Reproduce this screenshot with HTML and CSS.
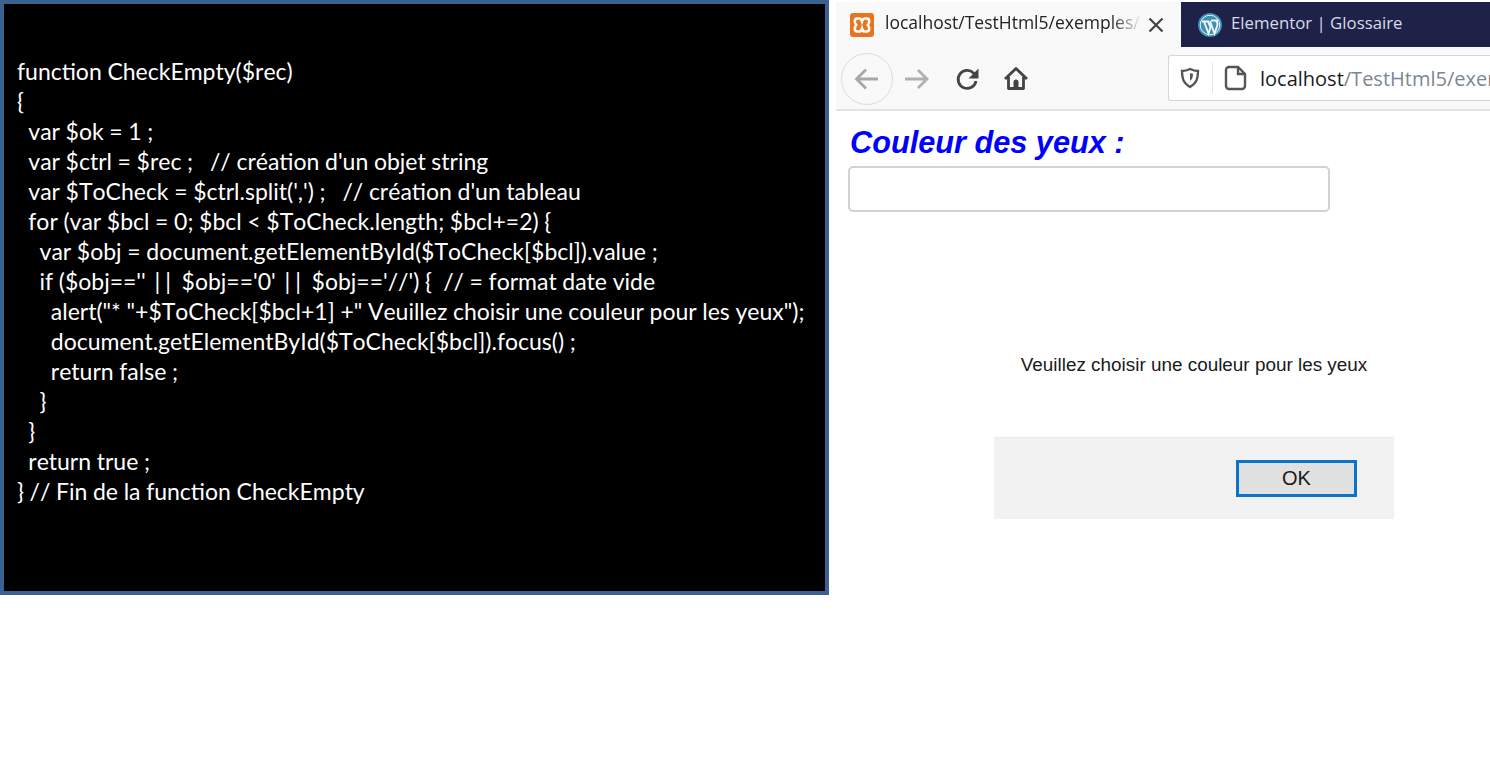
FILE: index.html
```html
<!DOCTYPE html>
<html lang="fr">
<head>
<meta charset="utf-8">
<title>Couleur des yeux</title>
<link rel="stylesheet" href="styles.css">
</head>
<body>
<div class="page">
<div class="code">
  <div class="line">function CheckEmpty($rec)</div>
  <div class="line">{</div>
  <div class="line">  var $ok = 1 ;</div>
  <div class="line">  var $ctrl = $rec ;   // création d'un objet string</div>
  <div class="line">  var $ToCheck = $ctrl.split(',') ;   // création d'un tableau</div>
  <div class="line">  for (var $bcl = 0; $bcl &lt; $ToCheck.length; $bcl+=2) {</div>
  <div class="line">    var $obj = document.getElementById($ToCheck[$bcl]).value ;</div>
  <div class="line">    if ($obj=='' <span class="pipes">||</span> $obj=='0' <span class="pipes">||</span> $obj=='//') {  // = format date vide</div>
  <div class="line">      alert("* "+$ToCheck[$bcl+1] +" Veuillez choisir une couleur pour les yeux");</div>
  <div class="line">      document.getElementById($ToCheck[$bcl]).focus() ;</div>
  <div class="line">      return false ;</div>
  <div class="line">    }</div>
  <div class="line">  }</div>
  <div class="line">  return true ;</div>
  <div class="line">} // Fin de la function CheckEmpty</div>
</div>
<section class="browser">
  <div class="tabs">
    <div class="tab tab-active">
      <svg class="icon" width="26" height="26" viewBox="0 0 26 26"><rect x="1" y="1" width="24" height="24" rx="3" fill="#e8741e"/><path d="M8 6.500h2.500c1.500 0 2 1.500 2.500 3 .5-1.500 1-3 2.500-3H18c2.500 0 3 4 .8 6.500 2.200 2.500 1.700 6.500-.8 6.500h-2.500c-1.500 0-2-1.500-2.500-3-.5 1.500-1 3-2.500 3H8c-2.500 0-3-4-.8-6.500C5 10.500 5.500 6.500 8 6.500z" fill="none" stroke="#fff" stroke-width="2.600"/></svg>
      <span class="tab-title tab-title-fade">localhost/TestHtml5/exemples/</span>
      <svg class="icon tab-close" width="16" height="16" viewBox="0 0 16 16"><path d="M1.500 1.500l13 13M14.500 1.500l-13 13" stroke="#444" stroke-width="2.200" fill="none"/></svg>
    </div>
    <div class="tab tab-dark">
      <svg class="icon" width="26" height="26" viewBox="0 0 26 26"><circle cx="13" cy="13" r="12" fill="#3f8fb5"/><circle cx="13" cy="13" r="9.800" fill="none" stroke="#e8f2f7" stroke-width="1"/><path d="M5 9.500h7M14 8.500h7M7 9.500l4.500 12 2-6-2.500-6M13 9l4.500 12.500 2.800-8c.6-1.700-.2-3.500-1.300-4.500" fill="none" stroke="#f2f7fa" stroke-width="1.800"/></svg>
      <span class="tab-title tab-title-small">Elementor | Glossaire</span>
    </div>
  </div>
  <div class="toolbar">
    <div class="nav-buttons">
      <span class="back">
        <svg class="icon" width="28" height="28" viewBox="0 0 28 28"><path d="M25 14H4M13 4.500L3.500 14l9.500 9.500" fill="none" stroke="#a8a8a8" stroke-width="2.800"/></svg>
      </span>
      <svg class="icon" width="28" height="28" viewBox="0 0 28 28"><path d="M2 14h22M15 5l9 9-9 9" fill="none" stroke="#b0b0b0" stroke-width="2.800"/></svg>
      <svg class="icon reload" width="26" height="26" viewBox="0 0 26 26"><path d="M21 15a9 9 0 1 1-2.500-8L21 9.500" fill="none" stroke="#444" stroke-width="2.800"/><path d="M23.500 2.500v10h-10z" fill="#444"/></svg>
      <svg class="icon home" width="26" height="26" viewBox="0 0 26 26"><path d="M2 13L13 2.500 24 13M5.500 11v11.500h15V11" fill="none" stroke="#444" stroke-width="2.800" stroke-linejoin="round"/><path d="M10.500 22v-6a2.500 2.500 0 0 1 5 0v6z" fill="#444"/></svg>
    </div>
    <div class="urlbar">
      <svg class="icon" width="20" height="22" viewBox="0 0 20 22"><path d="M10 2c3 1.500 5 2 8 2 0 7-1 12-8 16C3 16 2 11 2 4c3 0 5-.5 8-2z" fill="none" stroke="#555" stroke-width="2.400"/><path d="M10 6c1 .5 2 .7 3 .8 0 3-.5 5.500-3 7.200z" fill="#555"/></svg>
      <span class="divider"></span>
      <svg class="icon" width="24" height="26" viewBox="0 0 24 26"><path d="M3 5a3 3 0 0 1 3-3h9l7 7v12a3 3 0 0 1-3 3H6a3 3 0 0 1-3-3z M15 2v7h7" fill="none" stroke="#555" stroke-width="2.400"/></svg>
      <span class="url"><span class="host">localhost</span>/TestHtml5/exemples/</span>
    </div>
  </div>
  <div class="content">
    <h1 class="label">Couleur des yeux :</h1>
    <div class="field"></div>
    <div class="dialog">
      <p class="message">Veuillez choisir une couleur pour les yeux</p>
      <div class="dialog-footer"><button class="ok" type="button">OK</button></div>
    </div>
  </div>
</section>
</div>
</body>
</html>
```
FILE: styles.css
```css
* { box-sizing: border-box; }
html, body { margin: 0; height: 100%; background: #fff; overflow: hidden; }
.page { display: flex; align-items: flex-start; gap: 7px; width: 1490px; height: 758px; }
.code {
  flex: 0 0 829px; height: 595px; padding: 52px 0 0 13px;
  background: #000; border: 4px solid #3a6190; color: #fff;
  font: 23px/30px Lato, "Open Sans", sans-serif; font-kerning: none; word-spacing: -0.25px; overflow: hidden;
}
.line { height: 30px; white-space: pre; }
.pipes { letter-spacing: 5px; padding-left: 3px; }
.browser { flex: 1; min-width: 0; display: flex; flex-direction: column; height: 758px; overflow: hidden; font-family: "Open Sans", sans-serif; }
.icon { flex: none; }
.tabs { display: flex; height: 45px; margin-top: 2px; flex: none; }
.tab { display: flex; align-items: center; }
.tab-active { flex: 0 0 345px; padding: 0 17px 0 13px; background: #f9f9fa; color: #222; }
.tab-dark { flex: 1; padding-left: 16px; background: #1f2248; color: #d8dbe6; }
.tab-title { font-size: 17.500px; margin: 0 0 5px 10px; white-space: nowrap; overflow: hidden; }
.tab-title-fade { flex: 1; min-width: 0; -webkit-mask-image: linear-gradient(to right, #000 88%, transparent 100%); mask-image: linear-gradient(to right, #000 88%, transparent 100%); }
.tab-title-small { font-size: 16.800px; margin-left: 8px; }
.tab-close { margin-left: 6px; }
.toolbar { display: flex; align-items: center; height: 64px; flex: none; background: #f9f9fa; border-bottom: 2px solid #e3e3e3; padding: 1px 0 0 5px; }
.nav-buttons { display: flex; align-items: center; width: 327px; flex: none; }
.back { display: flex; align-items: center; justify-content: center; width: 52px; height: 52px; border: 1.500px solid #dcdcdc; border-radius: 50%; margin-right: 10px; }
.reload { margin-left: 24px; }
.home { margin-left: 22px; }
.urlbar { flex: 1; display: flex; align-items: center; height: 46px; margin-top: -2px; background: #fff; border: 1.500px solid #d6d6d6; border-right: 0; border-radius: 3px 0 0 3px; padding-left: 11px; white-space: nowrap; overflow: hidden; }
.divider { width: 1px; height: 30px; background: #e2e2e2; margin: 0 10px 0 12px; flex: none; }
.url { font-size: 20px; color: #7b8793; margin-left: 13px; padding-top: 2px; }
.host { color: #1c1c1c; }
.content { flex: 1; padding: 14px 0 0 12px; background: #fff; }
.label { margin: 0 0 0 2px; font: italic 700 30.700px/36px "Liberation Sans", Arial, sans-serif; color: #0000ff; }
.field { width: 482px; height: 46px; margin-top: 5px; background: #fff; border: 2px solid #d2d2d2; border-radius: 5px; }
.dialog { width: 400px; margin: 0 0 0 146px; font-family: "Liberation Sans", Arial, sans-serif; }
.message { margin: 0; padding-top: 142px; height: 225px; text-align: center; font-size: 18.900px; line-height: 22px; color: #1a1a1a; }
.dialog-footer { display: flex; align-items: flex-start; justify-content: flex-end; height: 82px; padding: 22px 37px 0 0; background: #f2f2f2; border-top: 1px solid #ebebeb; }
.ok { width: 121px; height: 37px; padding: 0; background: #e1e1e1; border: 3px solid #0a74cc; color: #1a1a1a; font: 20px "Liberation Sans", Arial, sans-serif; }
```
